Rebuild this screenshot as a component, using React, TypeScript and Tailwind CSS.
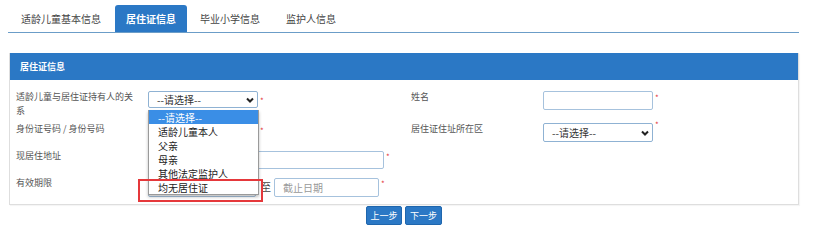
import React from "react";

const tabs = [
  { label: "适龄儿童基本信息", w: "w-[104px]" },
  { label: "居住证信息", w: "w-[72px]", active: true },
  { label: "毕业小学信息", w: "w-[86px]" },
  { label: "监护人信息", w: "w-[76px]" },
];

const options = ["--请选择--", "适龄儿童本人", "父亲", "母亲", "其他法定监护人", "均无居住证"];

function Star({ className = "" }: { className?: string }) {
  return <span className={`ml-[2px] self-start text-[8px] leading-[8px] text-[#e4393c] ${className}`}>*</span>;
}

function Chevron() {
  return (
    <svg width="8" height="6" viewBox="0 0 8 6" className="shrink-0">
      <polyline points="1,1.5 4,4.5 7,1.5" fill="none" stroke="#222" strokeWidth="2" />
    </svg>
  );
}

function FakeSelect({ className }: { className: string }) {
  return (
    <div
      className={`flex items-center justify-between rounded-[2px] border border-[#8fb2d3] bg-white pl-[8px] pr-[3px] text-[10px] text-[#333] ${className}`}
    >
      <span>--请选择--</span>
      <Chevron />
    </div>
  );
}

function TextBox({ className, placeholder }: { className: string; placeholder?: string }) {
  return (
    <div
      className={`flex items-center rounded-[2px] border border-[#a6c2dd] bg-white px-[8px] text-[10px] text-[#999] ${className}`}
    >
      {placeholder}
    </div>
  );
}

export default function App() {
  return (
    <div
      className="relative h-[243px] w-[825px] overflow-hidden bg-white text-[#555]"
      style={{ fontFamily: '"Noto Sans CJK SC", "Noto Sans", sans-serif' }}
    >
      {/* tabs */}
      <div className="ml-[8px] flex w-[791px] border-b border-[#6b9dc8] pt-[5px] pl-[1px]">
        {tabs.map((t) => (
          <div
            key={t.label}
            className={`flex h-[27px] items-center justify-center text-[10px] ${t.w} ${
              t.active ? "ml-[2px] rounded-t-[3px] bg-[#2b78c5] font-bold text-white" : "text-[#444]"
            }`}
          >
            {t.label}
          </div>
        ))}
      </div>

      {/* panel */}
      <div className="ml-[9px] mt-[20px] w-[790px] border border-t-0 border-[#dedede] shadow-[1px_1px_1px_rgba(0,0,0,0.04)]">
        <div className="flex h-[27px] items-center bg-[#2b78c5] pl-[10px] text-[9px] font-bold text-white">
          居住证信息
        </div>
        <div className="px-[6px] pt-[8px] pb-[7px] text-[9px] leading-[14px]">
          <div className="grid h-[32px] grid-cols-[132px_263px_132px_1fr]">
            <div className="pt-[2px]">
              适龄儿童与居住证持有人的关
              <br />系
            </div>
            <div className="flex">
              <FakeSelect className="mt-[3px] h-[17px] w-[110px]" />
              <Star className="mt-[9px]" />
            </div>
            <div className="pt-[2px]">姓名</div>
            <div className="flex">
              <TextBox className="mt-[3px] h-[19px] w-[110px]" />
              <Star className="mt-[6px]" />
            </div>
          </div>
          <div className="grid h-[24px] grid-cols-[132px_263px_132px_1fr]">
            <div className="pt-[2px]">身份证号码 / 身份号码</div>
            <div className="flex">
              <TextBox className="mt-[3px] h-[19px] w-[110px]" />
              <Star className="mt-[7px]" />
            </div>
            <div className="pt-[2px]">居住证住址所在区</div>
            <div className="flex">
              <FakeSelect className="mt-[3px] h-[19px] w-[110px]" />
              <Star className="mt-[1px]" />
            </div>
          </div>
          <div className="grid h-[27px] grid-cols-[132px_263px_132px_1fr]">
            <div className="pt-[5px]">现居住地址</div>
            <div className="flex">
              <TextBox className="mt-[7px] h-[18px] w-[236px]" />
              <Star className="mt-[9px]" />
            </div>
          </div>
          <div className="grid h-[26px] grid-cols-[132px_263px_132px_1fr]">
            <div className="pt-[5px]">有效期限</div>
            <div className="flex items-start">
              <TextBox className="mt-[7px] h-[19px] w-[108px]" />
              <span className="mt-[9px] ml-[5px] mr-[3px] text-[10px] text-[#444]">至</span>
              <TextBox className="mt-[7px] h-[19px] w-[105px]" placeholder="截止日期" />
              <Star className="mt-[9px]" />
            </div>
          </div>
        </div>
      </div>

      {/* buttons */}
      <div className="ml-[9px] mt-[1px] flex w-[790px] justify-center gap-[3px]">
        <button className="h-[19px] w-[36px] rounded-[2px] border border-[#1f66ad] bg-[#2b78c5] text-[9px] text-white">
          上一步
        </button>
        <button className="h-[19px] w-[37px] rounded-[2px] border border-[#1f66ad] bg-[#2b78c5] text-[9px] text-white">
          下一步
        </button>
      </div>

      {/* open dropdown list */}
      <div className="absolute left-[148px] top-[110px] w-[111px] border border-t-0 border-[#9a9a9a] bg-white shadow-[0_2px_3px_rgba(0,0,0,0.25)]">
        {options.map((o, i) => (
          <div
            key={o}
            className={`flex h-[14px] items-center pl-[9px] text-[10px] ${
              i === 0 ? "bg-[#3a8ee6] text-white" : "text-[#222]"
            }`}
          >
            {o}
          </div>
        ))}
      </div>

      {/* highlight box */}
      <div className="absolute left-[138px] top-[179px] h-[23px] w-[125px] border-2 border-[#e5383b]" />
    </div>
  );
}
